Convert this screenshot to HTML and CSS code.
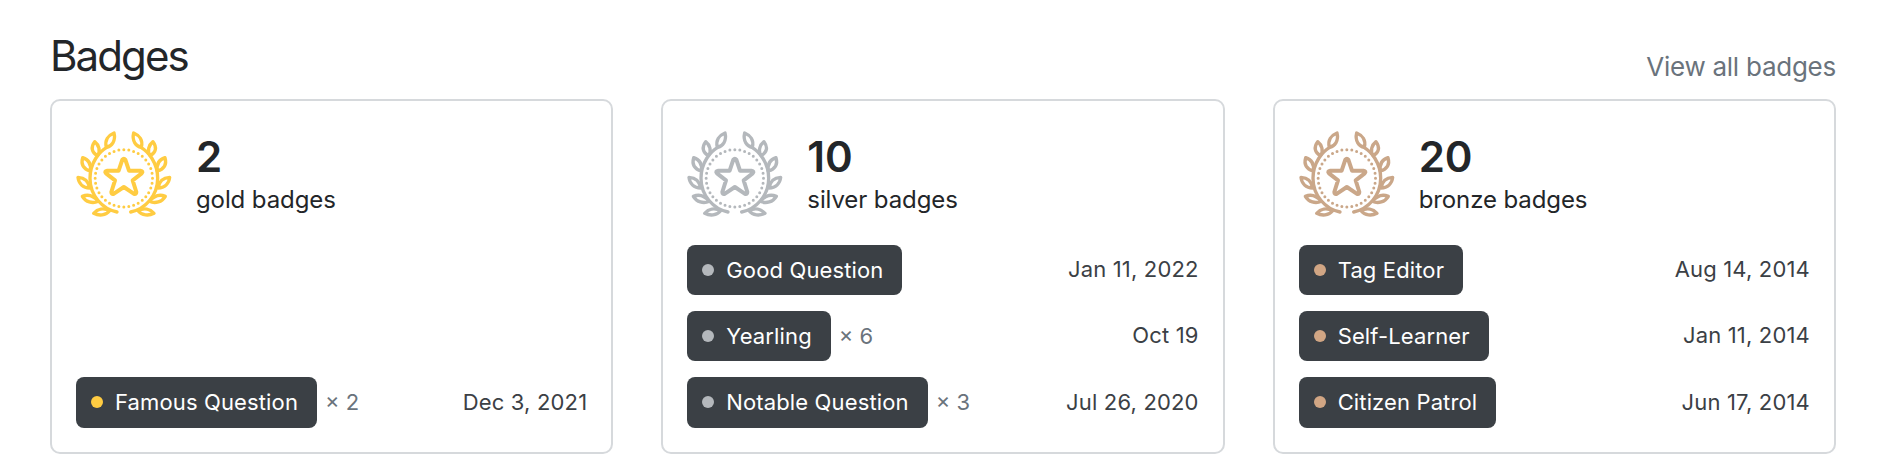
FILE: index.html
```
<!DOCTYPE html>
<html lang="en">
<head>
<meta charset="utf-8">
<title>Badges</title>
<link rel="stylesheet" href="styles.css">
</head>
<body>
<svg class="defs" width="0" height="0" aria-hidden="true">
  <symbol id="wreath" viewBox="18 0 288 288">
    <g fill="none" stroke="currentColor" stroke-width="10" stroke-linecap="round" stroke-linejoin="round">
      <g id="branch">
        <path d="M214 68C234 80 263 112 263 160C263 212 226 252 182 261"/>
        <path d="M214 67C198 64 185 48 191 24C208 31 220 46 214 67Z"/>
        <path d="M240 92C231 78 236 60 249 50C261 66 259 82 240 92Z"/>
        <path d="M262 138C259 118 267 104 285 98C291 118 283 132 262 138Z"/>
        <path d="M264 189C267 170 279 158 299 157C297 176 284 188 264 189Z"/>
        <path d="M238 229C252 212 270 207 286 214C276 231 256 237 238 229Z"/>
        <path d="M204 257C222 248 240 252 252 265C236 273 216 272 204 257Z"/>
      </g>
      <use href="#branch" transform="translate(323 0) scale(-1 1)"/>
      <circle cx="161.500" cy="160" r="86" stroke-width="9" pathLength="360" stroke-dasharray="0 10"/>
      <path stroke-width="12" d="M157 104Q161.500 98 166 104L177 137L211 137Q221 139 215 145L188 166L199 201Q199 210 191 206L161.500 186L132 206Q124 210 124 201L135 166L108 145Q102 139 112 137L146 137Z"/>
    </g>
  </symbol>
</svg>
<main class="page">
  <header class="head">
    <h1 class="title">Badges</h1>
    <a class="all">View all badges</a>
  </header>
  <div class="cards">
    <section class="card gold">
      <div class="summary">
        <svg class="icon"><use href="#wreath"/></svg>
        <div class="totals"><div class="count">2</div><div class="kind">gold badges</div></div>
      </div>
      <div class="list">
        <div class="row"><span class="tag"><i class="dot"></i>Famous Question</span><span class="times">× 2</span><span class="date">Dec 3, 2021</span></div>
      </div>
    </section>
    <section class="card silver">
      <div class="summary">
        <svg class="icon"><use href="#wreath"/></svg>
        <div class="totals"><div class="count">10</div><div class="kind">silver badges</div></div>
      </div>
      <div class="list">
        <div class="row"><span class="tag"><i class="dot"></i>Good Question</span><span class="date">Jan 11, 2022</span></div>
        <div class="row"><span class="tag"><i class="dot"></i>Yearling</span><span class="times">× 6</span><span class="date">Oct 19</span></div>
        <div class="row"><span class="tag"><i class="dot"></i>Notable Question</span><span class="times">× 3</span><span class="date">Jul 26, 2020</span></div>
      </div>
    </section>
    <section class="card bronze">
      <div class="summary">
        <svg class="icon"><use href="#wreath"/></svg>
        <div class="totals"><div class="count">20</div><div class="kind">bronze badges</div></div>
      </div>
      <div class="list">
        <div class="row"><span class="tag"><i class="dot"></i>Tag Editor</span><span class="date">Aug 14, 2014</span></div>
        <div class="row"><span class="tag"><i class="dot"></i>Self-Learner</span><span class="date">Jan 11, 2014</span></div>
        <div class="row"><span class="tag"><i class="dot"></i>Citizen Patrol</span><span class="date">Jun 17, 2014</span></div>
      </div>
    </section>
  </div>
</main>
</body>
</html>
```
FILE: styles.css
```
* { box-sizing: border-box; }
body { margin: 0; background: #fff; color: #232629; font-family: Inter, "Liberation Sans", sans-serif; }
.defs { display: block; }
.page { padding: 30px 66px 0 50px; }
.head { display: flex; justify-content: space-between; align-items: flex-end; height: 69px; padding-bottom: 15px; }
.title { margin: 0 0 1px; font-size: 42px; line-height: 54px; font-weight: 400; letter-spacing: -1.9px; }
.all { font-size: 26px; line-height: 34px; color: #6a737c; letter-spacing: -.25px; }
.cards { display: grid; grid-template-columns: repeat(3, 1fr); gap: 48px; height: 355px; }
.card { display: flex; flex-direction: column; justify-content: space-between; padding: 24px; border: 2px solid #d6d9dc; border-radius: 10px; }
.summary { display: flex; align-items: center; gap: 24px; height: 96px; }
.icon { width: 96px; height: 96px; color: var(--metal); }
.gold { --metal: #ffcc42; }
.silver { --metal: #b4b8bc; }
.bronze { --metal: #caa789; }
.bronze .dot { background: #d1a684; }
.totals { padding-top: 6px; }
.count { font-size: 42px; line-height: 42px; font-weight: 600; }
.kind { margin-top: 6px; font-size: 24px; line-height: 32px; letter-spacing: -.1px; }
.list { display: grid; gap: 16px; }
.row { display: flex; align-items: center; height: 50px; font-size: 22px; }
.row:last-child { height: 51px; }
.tag { display: flex; align-items: center; gap: 12px; height: 100%; padding: 0 19px 1px 15px; border-radius: 8px; background: #3b4045; color: #fff; letter-spacing: .13px; }
.dot { width: 12px; height: 12px; border-radius: 50%; background: var(--metal); }
.times { margin-left: 8px; padding-bottom: 1px; color: #6a737c; }
.date { margin-left: auto; padding-bottom: 2px; color: #3b4045; letter-spacing: .17px; }
```
